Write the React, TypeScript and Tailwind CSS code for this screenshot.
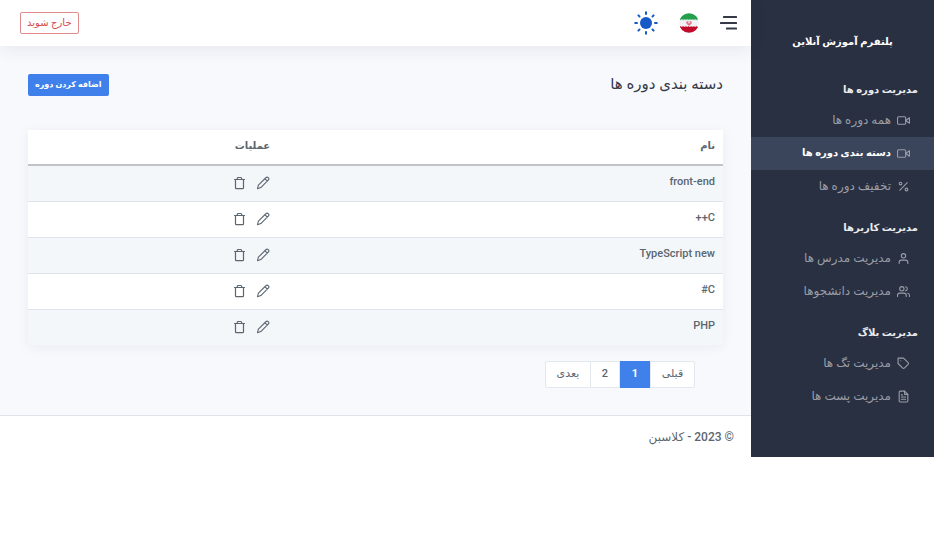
import type { ReactNode } from "react";
import type { IconType } from "react-icons";
import { FiFileText, FiPercent, FiTag, FiUser, FiUsers, FiVideo } from "react-icons/fi";

type NavItem = { label: string; icon: IconType; active?: boolean };
type NavGroup = { title: string; items: NavItem[] };

const groups: NavGroup[] = [
  {
    title: "مدیریت دوره ها",
    items: [
      { label: "همه دوره ها", icon: FiVideo },
      { label: "دسته بندی دوره ها", icon: FiVideo, active: true },
      { label: "تخفیف دوره ها", icon: FiPercent },
    ],
  },
  {
    title: "مدیریت کاربرها",
    items: [
      { label: "مدیریت مدرس ها", icon: FiUser },
      { label: "مدیریت دانشجوها", icon: FiUsers },
    ],
  },
  {
    title: "مدیریت بلاگ",
    items: [
      { label: "مدیریت تگ ها", icon: FiTag },
      { label: "مدیریت پست ها", icon: FiFileText },
    ],
  },
];

const categories = ["front-end", "C++", "TypeScript new", "C#", "PHP"];

function Sidebar() {
  return (
    <aside className="w-[183px] shrink-0 bg-[#293042] pb-[33px]">
      <h1 className="pt-8 text-center text-[10px] leading-5 font-bold text-white">
        پلتفرم آموزش آنلاین
      </h1>
      <nav className="pt-6">
        {groups.map((group) => (
          <section key={group.title} className="mb-[11px]">
            <h2 className="px-4 pt-1 pb-1 text-[10px] leading-5 font-bold text-[#e9ecef]">{group.title}</h2>
            <ul>
              {group.items.map(({ label, icon: Icon, active }) => (
                <li key={label}>
                  <a
                    href="#"
                    aria-current={active ? "page" : undefined}
                    className={
                      active
                        ? "flex h-[33px] items-center gap-1.5 bg-[#3a445b] pr-6 text-[10px] font-bold text-white"
                        : "flex h-[33px] items-center gap-1.5 pr-6 text-[12px] text-[#9a9da6]"
                    }
                  >
                    <Icon className="size-[13px] shrink-0 text-[#9a9da6]" />
                    <span className="pb-0.5">{label}</span>
                  </a>
                </li>
              ))}
            </ul>
          </section>
        ))}
      </nav>
    </aside>
  );
}

function MenuIcon() {
  return (
    <svg viewBox="0 0 18 14" className="h-[14px] w-[18px]" fill="#343a46">
      <rect x="3" y="0" width="14" height="2" rx=".5" />
      <rect x="0" y="6" width="17" height="2" rx=".5" />
      <rect x="6" y="11.5" width="11" height="2" rx=".5" />
    </svg>
  );
}

function IranFlag() {
  return (
    <svg viewBox="0 0 20 20" className="size-5">
      <clipPath id="flag-circle">
        <circle cx="10" cy="10" r="9.8" />
      </clipPath>
      <g clipPath="url(#flag-circle)">
        <rect width="20" height="20" fill="#f2f2f4" />
        <rect width="20" height="6.2" fill="#249f4b" />
        <rect y="14" width="20" height="6" fill="#c20a2b" />
        <path d="M1 6.6h18" stroke="#249f4b" strokeWidth=".8" strokeDasharray="1 .6" />
        <path d="M1 13.6h18" stroke="#c20a2b" strokeWidth=".8" strokeDasharray="1 .6" />
        <path
          d="M8.3 8.3c-1 1.2-.6 3 1.7 3.8 2.3-.8 2.7-2.6 1.7-3.8M9 8.5c-.6 1-.2 2.2 1 3 1.2-.8 1.6-2 1-3"
          fill="none"
          stroke="#dc3450"
          strokeWidth=".8"
        />
      </g>
    </svg>
  );
}

function SunIcon() {
  return (
    <svg viewBox="0 0 24 24" className="size-6" fill="#1758c8" stroke="#1758c8" strokeWidth="2" strokeLinecap="round">
      <circle cx="12" cy="12" r="6" stroke="none" />
      <path d="M12 1.2v1.800M12 21v1.800M1.200 12H3M21 12h1.800M4.400 4.400l1.100 1.100M18.500 18.500l1.100 1.100M4.400 19.600l1.100-1.100M18.500 5.500l1.100-1.100" />
    </svg>
  );
}

function PencilIcon() {
  return (
    <svg viewBox="0 0 14 14" className="size-[14px]" fill="none" stroke="currentColor" strokeWidth="1.1" strokeLinejoin="round">
      <path d="M1.500 12.700l.9-3.500 7.700-7.700a1.300 1.300 0 0 1 1.900 0l.5.5a1.300 1.300 0 0 1 0 1.900l-7.700 7.700zM9 2.800l2.400 2.400" />
    </svg>
  );
}

function TrashIcon() {
  return (
    <svg viewBox="0 0 14 14" className="size-[14px]" fill="none" stroke="currentColor" strokeWidth="1.2" strokeLinejoin="round" strokeLinecap="round">
      <path d="M2.500 3.500h10M3.500 3.500v8.200a1 1 0 0 0 1 1h6a1 1 0 0 0 1-1V3.500M5.300 3.300V2.500a1 1 0 0 1 1-1h2.400a1 1 0 0 1 1 1v.8" />
    </svg>
  );
}

function IconButton({ label, children }: { label: string; children: ReactNode }) {
  return (
    <button type="button" aria-label={label} className="flex items-center justify-center">
      {children}
    </button>
  );
}

function TopBar() {
  return (
    <header className="z-10 flex h-[46px] items-center bg-white pr-[13px] pl-5 shadow-[0_4px_18px_rgba(30,40,60,0.08)]">
      <div className="flex items-center gap-[21px]">
        <IconButton label="منو">
          <MenuIcon />
        </IconButton>
        <IconButton label="زبان">
          <IranFlag />
        </IconButton>
        <IconButton label="حالت روشن">
          <SunIcon />
        </IconButton>
      </div>
      <button type="button" className="mr-auto h-[22px] rounded-xs border border-[#e28a8c] px-1.5 text-[10px] leading-4 text-[#d9484c]">
        خارج شوید
      </button>
    </header>
  );
}

function CategoryTable() {
  return (
    <table className="w-full table-fixed border-collapse bg-white text-[11px] text-[#5c6670] shadow-[0_2px_12px_rgba(30,40,60,0.06)]">
      <thead>
        <tr className="h-[35px] border-b-2 border-[#c1c3c9]">
          <th scope="col" className="w-[64%] px-2 pb-1 text-right text-[10px] font-bold">نام</th>
          <th scope="col" className="px-2 pb-1 text-right text-[10px] font-bold">عملیات</th>
        </tr>
      </thead>
      <tbody>
        {categories.map((name) => (
          <tr key={name} className="h-9 border-b border-[#dfe4ec] odd:bg-[#f3f7fa] last:border-b-0">
            <td className="px-2 pb-0.5 font-medium">{name}</td>
            <td className="px-2">
              <div className="flex gap-2.5">
                <IconButton label="ویرایش">
                  <PencilIcon />
                </IconButton>
                <IconButton label="حذف">
                  <TrashIcon />
                </IconButton>
              </div>
            </td>
          </tr>
        ))}
      </tbody>
    </table>
  );
}

function Pagination() {
  const cell = "h-[27px] border border-[#e3e7ee] bg-white";
  return (
    <nav aria-label="صفحه بندی" className="mt-4 mr-7 flex text-[11px] text-[#5c6670]">
      <button type="button" className={`${cell} w-[45px] rounded-r-xs`}>قبلی</button>
      <button type="button" aria-current="page" className="h-[27px] w-[30px] bg-[#3f80ea] font-bold text-white">1</button>
      <button type="button" className={`${cell} w-[29px] border-l-0 font-medium`}>2</button>
      <button type="button" className={`${cell} w-[46px] rounded-l-xs`}>بعدی</button>
    </nav>
  );
}

export default function App() {
  return (
    <div dir="rtl" className="flex bg-white font-[Roboto,'DejaVu_Sans',sans-serif]">
      <Sidebar />
      <div className="flex min-w-0 flex-1 flex-col">
        <TopBar />
        <main className="flex-1 bg-[#f7f9fd] px-7 pt-7">
          <div className="flex items-start justify-between">
            <h2 className="text-[15px] leading-5 text-[#343a46]">دسته بندی دوره ها</h2>
            <button type="button" className="h-[22px] rounded-xs bg-[#3f80ea] px-[7px] text-[8px] font-bold text-white">
              اضافه کردن دوره
            </button>
          </div>
          <div className="mt-[34px]">
            <CategoryTable />
          </div>
          <Pagination />
        </main>
        <footer className="flex h-[42px] items-center border-t border-[#dfe4ec] bg-white px-[17px] text-[12px] font-medium text-[#5c6670]">
          © 2023 - کلاسبن
        </footer>
      </div>
    </div>
  );
}
